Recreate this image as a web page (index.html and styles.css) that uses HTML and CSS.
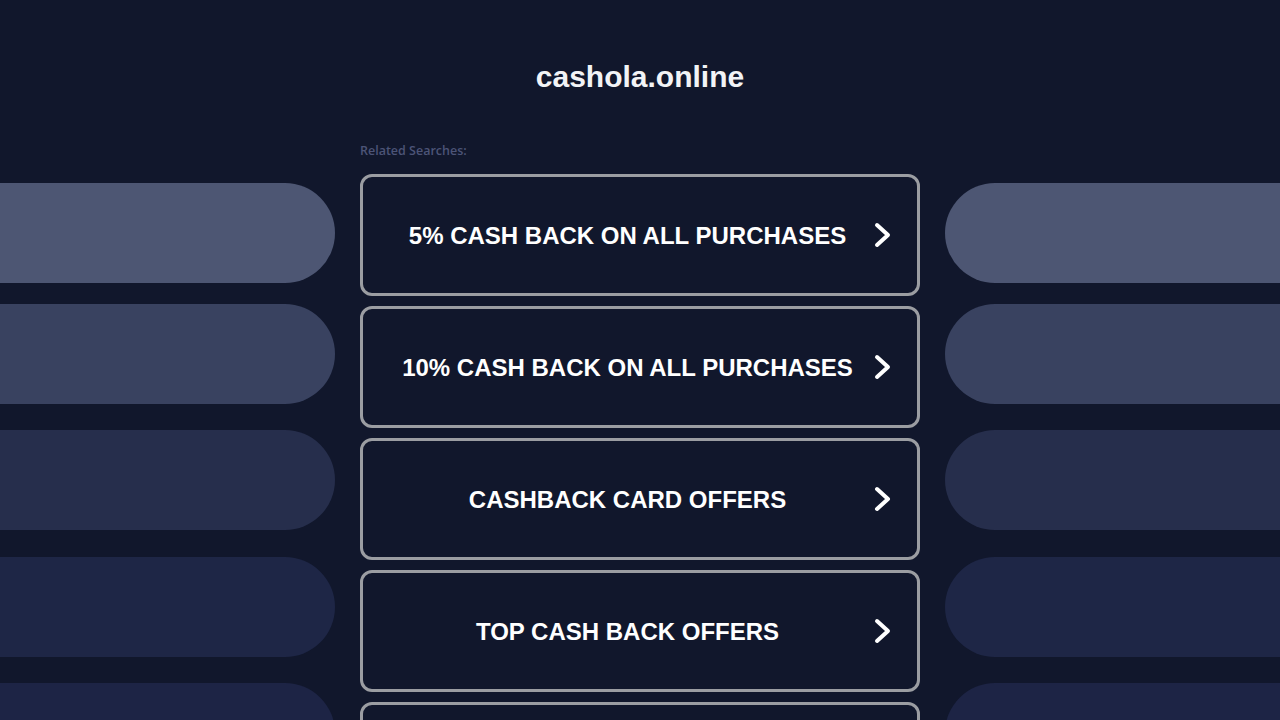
FILE: index.html
```html
<!DOCTYPE html>
<html>
<head>
<meta charset="utf-8">
<link rel="stylesheet" href="styles.css">
</head>
<body>
<div class="page">
  <header class="header"><h1 class="title">cashola.online</h1></header>
  <div class="layout">
    <div class="side side-left">
      <div class="pill p1"></div>
      <div class="pill p2"></div>
      <div class="pill p3"></div>
      <div class="pill p4"></div>
      <div class="pill p5"></div>
    </div>
    <main class="center">
      <div class="related">Related Searches:</div>
      <div class="cards">
        <a class="card"><span class="label">5% CASH BACK ON ALL PURCHASES</span><svg class="chev" viewBox="0 0 18 26"><path d="M3 3 L14 13 L3 23" fill="none" stroke="#fff" stroke-width="4" stroke-linecap="round" stroke-linejoin="round"/></svg></a>
        <a class="card"><span class="label">10% CASH BACK ON ALL PURCHASES</span><svg class="chev" viewBox="0 0 18 26"><path d="M3 3 L14 13 L3 23" fill="none" stroke="#fff" stroke-width="4" stroke-linecap="round" stroke-linejoin="round"/></svg></a>
        <a class="card"><span class="label">CASHBACK CARD OFFERS</span><svg class="chev" viewBox="0 0 18 26"><path d="M3 3 L14 13 L3 23" fill="none" stroke="#fff" stroke-width="4" stroke-linecap="round" stroke-linejoin="round"/></svg></a>
        <a class="card"><span class="label">TOP CASH BACK OFFERS</span><svg class="chev" viewBox="0 0 18 26"><path d="M3 3 L14 13 L3 23" fill="none" stroke="#fff" stroke-width="4" stroke-linecap="round" stroke-linejoin="round"/></svg></a>
        <a class="card"><span class="label"></span><svg class="chev" viewBox="0 0 18 26"><path d="M3 3 L14 13 L3 23" fill="none" stroke="#fff" stroke-width="4" stroke-linecap="round" stroke-linejoin="round"/></svg></a>
      </div>
    </main>
    <div class="side side-right">
      <div class="pill p1"></div>
      <div class="pill p2"></div>
      <div class="pill p3"></div>
      <div class="pill p4"></div>
      <div class="pill p5"></div>
    </div>
  </div>
</div>
</body>
</html>
```
FILE: styles.css
```css
html, body {
  margin: 0;
  padding: 0;
  background: #11172c;
  overflow: hidden;
  height: 720px;
}
body {
  font-family: "Liberation Sans", Arial, sans-serif;
  color: #fff;
}
.header {
  padding-top: 58px;
  height: 84px;
  box-sizing: content-box;
  text-align: center;
}
.title {
  margin: 0;
  font-size: 30px;
  line-height: 38px;
  font-weight: 700;
  color: #f2f3f6;
}
.layout {
  display: flex;
  gap: 25px;
  justify-content: space-between;
}
.side {
  width: 335px;
  flex: none;
  display: flex;
  flex-direction: column;
  padding-top: 41px;
  gap: 26px;
}
.side .p1 { margin-bottom: -5px; }
.side .p3 { margin-bottom: 1px; }
.pill {
  height: 100px;
  flex: none;
}
.side-left .pill { border-radius: 0 50px 50px 0; }
.side-right .pill { border-radius: 50px 0 0 50px; }
.p1 { background: #4d5673; }
.p2 { background: #394260; }
.p3 { background: #262e4c; }
.p4 { background: #1e2646; }
.p5 { background: #1d2445; }
.center {
  width: 560px;
  flex: none;
}
.related {
  font-family: "Open Sans", "Liberation Sans", sans-serif;
  font-size: 12.5px;
  font-weight: 600;
  line-height: 16px;
  color: #4c5477;
  height: 16px;
  padding-top: 1px;
  margin-bottom: 15px;
}
.cards {
  display: flex;
  flex-direction: column;
  gap: 10px;
}
.card {
  height: 122px;
  box-sizing: border-box;
  border: 3px solid #9b9da2;
  border-radius: 12px;
  display: flex;
  align-items: center;
  padding-left: 18px;
  padding-right: 25px;
  flex: none;
}
.label {
  flex: 1;
  text-align: center;
  font-size: 24px;
  font-weight: 700;
  color: #fff;
  white-space: nowrap;
  padding-top: 2px;
}
.chev {
  width: 18px;
  height: 26px;
  flex: none;
}
```
